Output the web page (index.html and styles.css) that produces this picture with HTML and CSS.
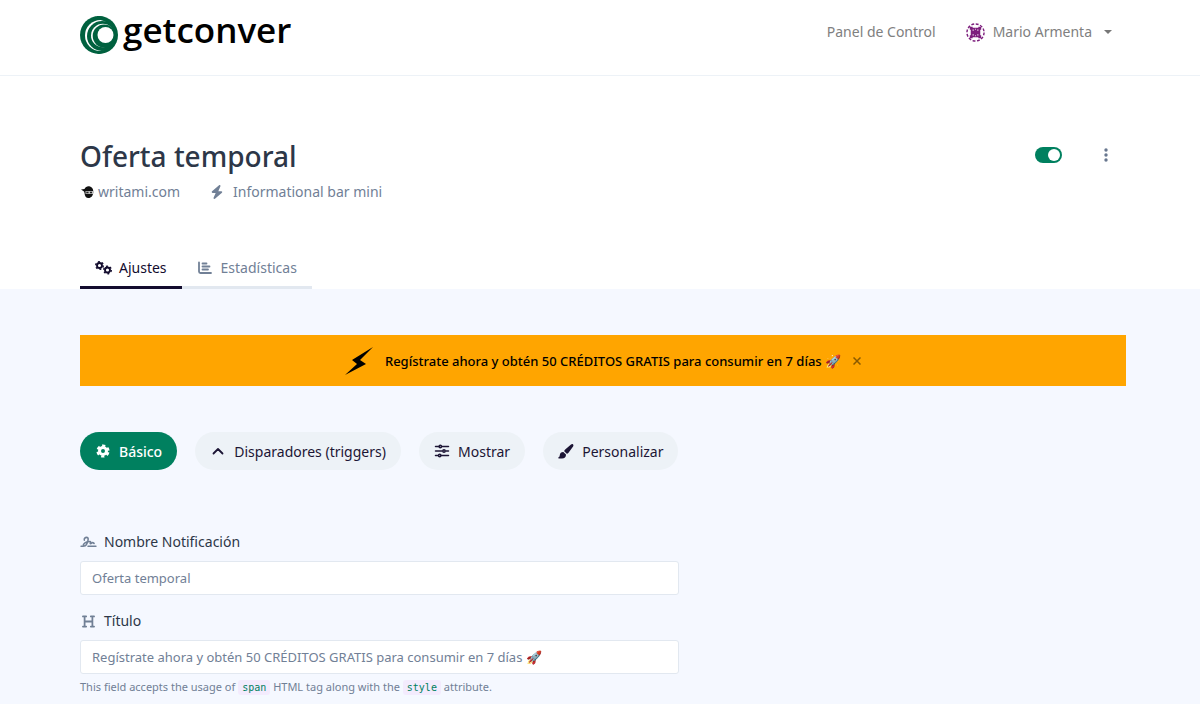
FILE: index.html
```
<!DOCTYPE html>
<html lang="es">
<head>
    <meta charset="UTF-8">
    <meta name="viewport" content="width=device-width, initial-scale=1.0">
    <title>Oferta temporal - getconver</title>
    <link rel="stylesheet" href="styles.css">
</head>
<body>
  <header class="navbar">
    <div class="container navbar-inner">
      <a href="#" class="brand">
        <svg class="brand-mark" viewBox="0 0 38 38" aria-hidden="true">
          <circle cx="19" cy="19" r="19" fill="#00613f"/>
          <circle cx="20.500" cy="19.500" r="15.500" fill="#fff"/>
          <circle cx="22" cy="20" r="15" fill="#00613f"/>
          <circle cx="22.800" cy="19.500" r="11.800" fill="#fff"/>
          <circle cx="24.200" cy="20" r="11.500" fill="#00613f"/>
          <circle cx="25.500" cy="19" r="8" fill="#fff"/>
          <path d="M17 0a19 19 0 1 1 0 38l3-3c9-1 15-8 14.500-16S27 4 17 3.500z" fill="#00613f"/>
        </svg>
        <span>getconver</span>
      </a>
      <nav class="nav">
        <a href="#">Panel de Control</a>
        <a href="#" class="user">
          <svg class="avatar" viewBox="0 0 20 20" aria-hidden="true">
            <circle cx="10" cy="10" r="9" fill="none" stroke="#7d1f7d" stroke-width="1.500" stroke-dasharray="3 1.712"/>
            <path d="M4 4h3v1h6V4h3v3h-1v6h1v3h-3v-1H7v1H4v-3h1V7H4z" fill="#7d1f7d"/>
            <path d="M7 6.500h1v2H7zM12 6.500h1v2h-1zM7 11.500h1v2H7zM12 11.500h1v2h-1zM9.500 6h1v1h-1zM9.500 13h1v1h-1z" fill="#e6cfe6"/>
          </svg>
          <span>Mario Armenta</span>
          <span class="caret"></span>
        </a>
      </nav>
    </div>
  </header>

  <section class="page-head">
    <div class="container">
      <div class="title-row">
        <h1>Oferta temporal</h1>
        <div class="title-actions">
          <input type="checkbox" class="switch" aria-label="Activar notificación" checked>
          <button type="button" class="more" aria-label="Más opciones">
            <svg viewBox="0 0 4 14" aria-hidden="true"><circle cx="2" cy="2" r="1.700"/><circle cx="2" cy="7" r="1.700"/><circle cx="2" cy="12" r="1.700"/></svg>
          </button>
        </div>
      </div>
      <div class="meta">
        <a href="#" class="site">
          <svg viewBox="0 0 14 14" aria-hidden="true">
            <path d="M1 4.500 4.500 4C5.500 2 7 1 9 1.200c3 .3 4.500 3 4.300 6-.2 3.300-2 5.800-4.800 5.800C6 13 4.700 11 4.500 8L4 6.500z" fill="#111"/>
            <path d="M5.500 6H13v3H5.500z" fill="#bbb"/>
            <path d="M6.300 6.800H8.500v1.400H6.300zM10 6.800h2v1.400h-2z" fill="#222"/>
          </svg>
          <span>writami.com</span>
        </a>
        <span class="type">
          <svg viewBox="0 0 448 512" fill="currentColor" aria-hidden="true"><path d="M349.400 44.600c5.900-13.700 1.500-29.700-10.600-38.500s-28.600-8-39.900 1.800l-256 224c-10 8.800-13.600 22.900-8.900 35.300S50.700 288 64 288h111.500L98.600 467.400c-5.900 13.700-1.500 29.700 10.600 38.500s28.600 8 39.900-1.800l256-224c10-8.800 13.600-22.900 8.900-35.300s-16.600-20.700-30-20.700H272.500z"/></svg>
          <span>Informational bar mini</span>
        </span>
      </div>
      <nav class="tabs">
        <a href="#" class="tab active">
          <svg viewBox="0 0 18 14" aria-hidden="true">
            <g fill="none" stroke="currentColor">
              <circle cx="4.500" cy="4.500" r="2.500" stroke-width="1.900"/>
              <circle cx="4.500" cy="4.500" r="3.800" stroke-width="1.400" stroke-dasharray="1.900 2.079"/>
              <circle cx="12.500" cy="9" r="2.500" stroke-width="1.900"/>
              <circle cx="12.500" cy="9" r="3.800" stroke-width="1.400" stroke-dasharray="1.900 2.079"/>
            </g>
          </svg>
          <span>Ajustes</span>
        </a>
        <a href="#" class="tab">
          <svg viewBox="0 0 18 14" aria-hidden="true">
            <path d="M2 1.500v9q0 1.500 1.500 1.500H14M5.500 2.500h4M5.500 5.500h7M5.500 8.500h5.500" fill="none" stroke="currentColor" stroke-width="1.800" stroke-linecap="round"/>
          </svg>
          <span>Estadísticas</span>
        </a>
      </nav>
    </div>
  </section>

  <main class="container">
    <div class="offer-bar">
      <svg class="bolt" viewBox="0 0 28 28" aria-hidden="true"><path d="M28 0 7 13l5 4L0 28l21-11-6-4z"/></svg>
      <span>Regístrate ahora y obtén 50 CRÉDITOS GRATIS para consumir en 7 días 🚀</span>
      <button type="button" class="close" aria-label="Cerrar">
        <svg viewBox="0 0 8 8" aria-hidden="true"><path d="M.5.5l7 7M7.500.5l-7 7"/></svg>
      </button>
    </div>

    <div class="grid">
      <div class="column">
        <div class="pills">
          <button type="button" class="pill active">
            <svg viewBox="0 0 16 16" aria-hidden="true">
              <g fill="none" stroke="currentColor">
                <circle cx="8" cy="8" r="3.500" stroke-width="3"/>
                <circle cx="8" cy="8" r="5.500" stroke-width="2.200" stroke-dasharray="3.200 2.560" stroke-dashoffset="-1.300"/>
              </g>
            </svg>
            <span>Básico</span>
          </button>
          <button type="button" class="pill">
            <svg viewBox="0 0 16 16" aria-hidden="true"><path d="M3.500 10.500 8 6l4.500 4.500" fill="none" stroke="currentColor" stroke-width="1.800" stroke-linecap="round" stroke-linejoin="round"/></svg>
            <span>Disparadores (triggers)</span>
          </button>
          <button type="button" class="pill">
            <svg viewBox="0 0 16 16" aria-hidden="true">
              <g fill="none" stroke="currentColor" stroke-width="1.500" stroke-linecap="round">
                <path d="M1.500 3.500h3M8 3.500h6.500M1.500 8h6.500M12 8h2.500M1.500 12.500h2.500M7.500 12.500h7"/>
                <circle cx="6.300" cy="3.500" r="1.200"/><circle cx="10" cy="8" r="1.200"/><circle cx="5.700" cy="12.500" r="1.200"/>
              </g>
            </svg>
            <span>Mostrar</span>
          </button>
          <button type="button" class="pill">
            <svg viewBox="0 0 16 16" fill="currentColor" aria-hidden="true"><path d="M14.900 1.200c.7.600.7 1.400.2 2.200l-4.600 6.300c-.5.600-1 .9-1.700 1.100L6.200 8.300c.1-.7.400-1.300 1-1.800l5.800-5.100c.7-.6 1.300-.7 1.900-.2zM5.300 8.900l2.700 2.600c.1 2.400-1.500 4-4 4H1.200c-1 0-1.200-1.200-.4-1.600.9-.4.9-1.200 1-2C2 10.100 3.400 8.800 5.300 8.900z"/></svg>
            <span>Personalizar</span>
          </button>
        </div>

        <form>
          <div class="field">
            <label for="name">
              <svg viewBox="0 0 18 14" aria-hidden="true"><path d="M1 11h2.500M8.500 11H17M4.500 4.500C4 2.500 5.500 1.500 7 1.500c2 0 2 2 1 5S5.500 11.500 4 10.500 4.500 7.500 7 6.500l3-.5c1.500-.5 1.500.5 1 1.500s.5 1 1.500 0 2 0 2.500.5" fill="none" stroke="currentColor" stroke-width="1.700" stroke-linecap="round"/></svg>
              <span>Nombre Notificación</span>
            </label>
            <input type="text" id="name" value="Oferta temporal">
          </div>
          <div class="field">
            <label for="title">
              <svg viewBox="0 0 18 14" aria-hidden="true"><path d="M3 1.500h3.500M11.500 1.500H15M3 12.500h3.500M11.500 12.500H15M4.800 1.500v11M13.200 1.500v11M5 7h8" fill="none" stroke="currentColor" stroke-width="1.900" stroke-linecap="round"/></svg>
              <span>Título</span>
            </label>
            <input type="text" id="title" value="Regístrate ahora y obtén 50 CRÉDITOS GRATIS para consumir en 7 días 🚀">
            <small>This field accepts the usage of <code>span</code> HTML tag along with the <code>style</code> attribute.</small>
          </div>
        </form>
      </div>
    </div>
  </main>
</body>
</html>
```
FILE: styles.css
```
* {
  box-sizing: border-box;
}

body {
  margin: 0;
  background: #f5f8ff;
  color: #2d3748;
  font-family: "Noto Sans", sans-serif;
  font-size: 14px;
  line-height: 20px;
}

a {
  color: inherit;
  text-decoration: none;
}

button, input {
  font-family: inherit;
}

button {
  cursor: pointer;
}

.container {
  padding: 0 74px 0 80px;
}

.navbar {
  background: white;
  border-bottom: 1px solid #edf2f7;
}

.navbar-inner {
  display: flex;
  justify-content: space-between;
  height: 75px;
}

.brand {
  display: flex;
  gap: 5px;
  padding-top: 16px;
  color: black;
  font-family: "Open Sans", sans-serif;
  font-size: 35px;
  font-weight: 600;
  line-height: 28px;
}

.brand-mark {
  width: 38px;
  height: 38px;
}

.nav {
  display: flex;
  gap: 30px;
  height: 64px;
  align-items: center;
  padding-right: 14px;
  color: #808080;
}

.user {
  display: flex;
  align-items: center;
  gap: 8px;
}

.avatar {
  width: 19px;
  height: 19px;
}

.caret {
  margin-left: 4px;
  border: 4px solid transparent;
  border-top-color: #777;
  border-bottom: 0;
}

.page-head {
  background: white;
  padding-top: 60px;
}

.title-row {
  display: flex;
  justify-content: space-between;
  align-items: flex-start;
}

h1 {
  margin: 0;
  font-size: 28px;
  line-height: 40px;
  font-weight: 500;
}

.title-actions {
  display: flex;
  align-items: center;
  gap: 36px;
  height: 38px;
  padding-right: 12px;
}

.switch {
  appearance: none;
  display: flex;
  width: 27px;
  height: 16px;
  margin: 0;
  padding: 2px;
  border-radius: 8px;
  background: #cbd5e0;
  cursor: pointer;
}

.switch::before {
  content: "";
  width: 12px;
  height: 12px;
  border-radius: 50%;
  background: white;
}

.switch:checked {
  justify-content: flex-end;
  background: #00805f;
}

.more {
  display: flex;
  padding: 0 6px;
  border: 0;
  background: none;
}

.more svg {
  width: 4px;
  height: 14px;
  fill: #68778f;
}

.meta {
  display: flex;
  gap: 30px;
  padding-top: 6px;
  color: #718096;
}

.site, .type {
  display: flex;
  align-items: center;
}

.site {
  gap: 4px;
}

.type {
  gap: 9px;
}

.site svg, .type svg {
  width: 14px;
  height: 14px;
}

.tabs {
  display: flex;
  padding-top: 44px;
}

.tab {
  display: flex;
  align-items: center;
  gap: 6px;
  padding: 12px 15px 8px;
  border-bottom: 3px solid #e2e8f0;
  color: #718096;
}

.tab.active {
  border-color: #130c2e;
  color: #130c2e;
}

.tab svg {
  width: 18px;
  height: 14px;
}

.offer-bar {
  display: flex;
  justify-content: center;
  align-items: center;
  gap: 12px;
  height: 51px;
  margin-top: 46px;
  background: orange;
  color: black;
  font-size: 13px;
  font-weight: 500;
}

.bolt {
  width: 28px;
  height: 28px;
}

.close {
  display: flex;
  padding: 0;
  border: 0;
  background: none;
}

.close svg {
  width: 8px;
  height: 8px;
  stroke: #8a5a00;
  stroke-width: 1.5;
}

.grid {
  display: grid;
  grid-template-columns: repeat(12, minmax(0, 1fr));
  gap: 28px;
  padding-top: 46px;
}

.column {
  grid-column: span 7;
}

.pills {
  display: flex;
  justify-content: space-between;
}

.pill {
  display: flex;
  align-items: center;
  gap: 8px;
  height: 38px;
  padding: 0 15px;
  border: 0;
  border-radius: 19px;
  background: #edf2f7;
  color: #1c1535;
  font-size: 14px;
  white-space: nowrap;
}

.pill.active {
  background: #00805f;
  color: white;
  font-weight: 500;
}

.pill svg {
  width: 16px;
  height: 16px;
}

form {
  padding-top: 62px;
}

.field {
  margin-bottom: 16px;
}

.field label {
  display: flex;
  align-items: center;
  gap: 7px;
  margin-bottom: 9px;
}

.field label svg {
  width: 17px;
  height: 13px;
  color: #718096;
}

.field input {
  display: block;
  width: 100%;
  height: 34px;
  padding: 0 11px;
  border: 1px solid #e2e8f0;
  border-radius: 3px;
  background: white;
  color: #718096;
  font-size: 13px;
}

small {
  display: block;
  padding-top: 3px;
  color: #718096;
  font-size: 11px;
}

code {
  padding: 2px 4px;
  border-radius: 3px;
  background: #f3ebfd;
  color: #00805f;
  font-family: "DejaVu Sans Mono", monospace;
  font-size: 10px;
}
```
